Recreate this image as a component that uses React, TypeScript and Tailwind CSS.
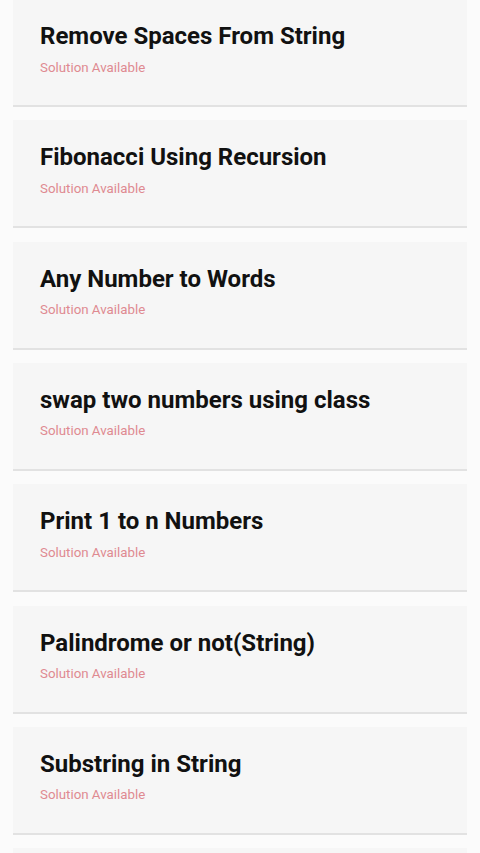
import React from "react";

const items = [
  "Remove Spaces From String",
  "Fibonacci Using Recursion",
  "Any Number to Words",
  "swap two numbers using class",
  "Print 1 to n Numbers",
  "Palindrome or not(String)",
  "Substring in String",
];

export default function App() {
  return (
    <div
      className="w-[480px] h-[853px] overflow-hidden bg-[#fbfbfb]"
      style={{ fontFamily: "Roboto, 'Liberation Sans', sans-serif" }}
    >
      <div className="flex flex-col gap-[13.33px] px-[13px] -mt-px">
        {items.map((t) => (
          <div
            key={t}
            className="h-[108px] shrink-0 bg-[#f6f6f6] border-b-2 border-[#e2e2e2] pl-[27px] pt-[23px] flex flex-col"
          >
            <div className="text-[24px] leading-[28px] font-bold text-[#111111]">{t}</div>
            <div className="mt-[9.5px] text-[13.3px] leading-[16px] text-[#df8a91]">
              Solution Available
            </div>
          </div>
        ))}
        <div className="h-[108px] shrink-0 bg-[#f6f6f6] border-b-2 border-[#e2e2e2]" />
      </div>
    </div>
  );
}
